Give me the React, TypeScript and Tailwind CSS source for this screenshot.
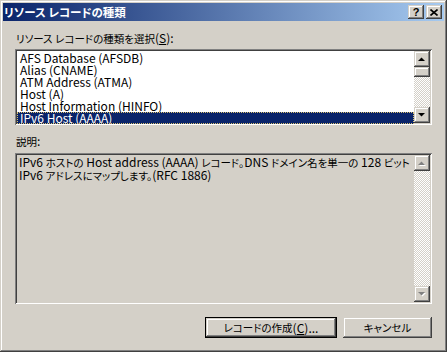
import React from "react";

const FONT = '"Noto Sans CJK JP", "Liberation Sans", sans-serif';

const raised =
  "shadow-[inset_-1px_-1px_0_#404040,inset_1px_1px_0_#d4d0c8,inset_-2px_-2px_0_#808080,inset_2px_2px_0_#ffffff]";
const sunken =
  "shadow-[inset_1px_1px_0_#808080,inset_-1px_-1px_0_#ffffff,inset_2px_2px_0_#404040,inset_-2px_-2px_0_#d4d0c8]";

const CJK = /([\u3000-\u30ff\u3400-\u9fff\uff00-\uffef]+)/;

function T({ text }: { text: string }) {
  const parts = text.split(CJK);
  return (
    <>
      {parts.map((p, i) =>
        p === "" ? null : CJK.test(p) ? (
          <span key={i} className="text-[10.5px]">
            {p}
          </span>
        ) : (
          <React.Fragment key={i}>{p}</React.Fragment>
        )
      )}
    </>
  );
}

function Arrow({ up, disabled }: { up?: boolean; disabled?: boolean }) {
  const pts = up ? "0,4 7,4 3.5,0.5" : "0,0 7,0 3.5,3.5";
  return (
    <svg width="8" height="5" viewBox="0 0 8 5" className="block">
      {disabled && (
        <polygon points={up ? "1,5 8,5 4.5,1.5" : "1,1 8,1 4.5,4.5"} fill="#ffffff" />
      )}
      <polygon points={pts} fill={disabled ? "#808080" : "#000000"} />
    </svg>
  );
}

function ScrollBtn({ up, disabled }: { up?: boolean; disabled?: boolean }) {
  return (
    <div className={`w-[16px] h-[16px] bg-[#d4d0c8] flex items-center justify-center ${raised}`}>
      <Arrow up={up} disabled={disabled} />
    </div>
  );
}

const track =
  "bg-[repeating-conic-gradient(#ffffff_0%_25%,#d4d0c8_0%_50%)] bg-[length:2px_2px]";

export default function App() {
  const items = [
    "AFS Database (AFSDB)",
    "Alias (CNAME)",
    "ATM Address (ATMA)",
    "Host (A)",
    "Host Information (HINFO)",
    "IPv6 Host (AAAA)",
  ];
  return (
    <div
      className="w-[447px] h-[352px] bg-[#d4d0c8] p-[3px] flex flex-col text-[12px] text-black [font-feature-settings:'palt'] shadow-[inset_-1px_-1px_0_#404040,inset_1px_1px_0_#d4d0c8,inset_-2px_-2px_0_#808080,inset_2px_2px_0_#ffffff]"
      style={{ fontFamily: FONT }}
    >
      {/* Title bar */}
      <div className="h-[18px] flex items-center justify-between pl-[1px] pr-[2px] bg-[linear-gradient(to_right,#0a246a,#a6caf0)]">
        <span className="text-white font-bold text-[11.5px] leading-[18px]">
          リソース レコードの種類
        </span>
        <div className="flex items-center">
          <div className={`w-[16px] h-[14px] bg-[#d4d0c8] flex items-center justify-center ${raised}`}>
            <span
              className="text-[11px] font-bold leading-none"
              style={{ fontFamily: '"Liberation Sans", sans-serif' }}
            >
              ?
            </span>
          </div>
          <div className={`ml-[2px] w-[16px] h-[14px] bg-[#d4d0c8] flex items-center justify-center ${raised}`}>
            <svg width="8" height="7" viewBox="0 0 8 7" className="block">
              <path d="M0.5 0.5 L7.5 6.5 M7.5 0.5 L0.5 6.5" stroke="#000" strokeWidth="1.6" />
            </svg>
          </div>
        </div>
      </div>

      {/* Body */}
      <div className="flex-1 flex flex-col px-[12px]">
        <div className="mt-[10px] h-[14px] leading-[14px] pl-[1px] whitespace-nowrap">
          <T text="リソース レコードの種類を選択" />(<span className="underline">S</span>):
        </div>

        {/* Listbox */}
        <div className={`mt-[4px] h-[76px] bg-white p-[2px] flex ${sunken}`}>
          <div className="flex-1 flex flex-col pt-[1px]">
            {items.map((t, i) => (
              <div
                key={t}
                className={`h-[12px] leading-[12px] pl-[3px] whitespace-nowrap ${
                  i === 5
                    ? "bg-[#0a246a] text-white outline-1 outline-dotted outline-[#d8c070] -outline-offset-1"
                    : ""
                }`}
              >
                {t}
              </div>
            ))}
          </div>
          <div className="w-[16px] flex flex-col">
            <ScrollBtn up />
            <div className={`h-[10px] bg-[#d4d0c8] ${raised}`} />
            <div className={`flex-1 ${track}`} />
            <ScrollBtn />
          </div>
        </div>

        <div className="mt-[9px] h-[14px] leading-[14px] pl-[1px]">
          <T text="説明" />:
        </div>

        {/* Description */}
        <div className={`mt-[5px] h-[151px] bg-[#d4d0c8] p-[2px] flex ${sunken}`}>
          <div className="flex-1 min-w-0 pl-[2px] pt-[1px] leading-[12px] whitespace-nowrap">
            <div>
              <T text="IPv6 ホストの Host address (AAAA) レコード。DNS ドメイン名を単一の 128 ビット" />
            </div>
            <div>
              <T text="IPv6 アドレスにマップします。(RFC 1886)" />
            </div>
          </div>
          <div className="w-[16px] flex flex-col">
            <ScrollBtn up disabled />
            <div className={`flex-1 ${track}`} />
            <ScrollBtn disabled />
          </div>
        </div>

        {/* Buttons */}
        <div className="mt-[13px] flex justify-end gap-[6px]">
          <div className="w-[132px] h-[21px] border border-black">
            <div className={`w-full h-full bg-[#d4d0c8] flex items-center justify-center whitespace-nowrap ${raised}`}>
              <T text="レコードの作成" />(<span className="underline">C</span>)...
            </div>
          </div>
          <div className={`w-[89px] h-[21px] bg-[#d4d0c8] flex items-center justify-center ${raised}`}>
            <T text="キャンセル" />
          </div>
        </div>
      </div>
    </div>
  );
}
